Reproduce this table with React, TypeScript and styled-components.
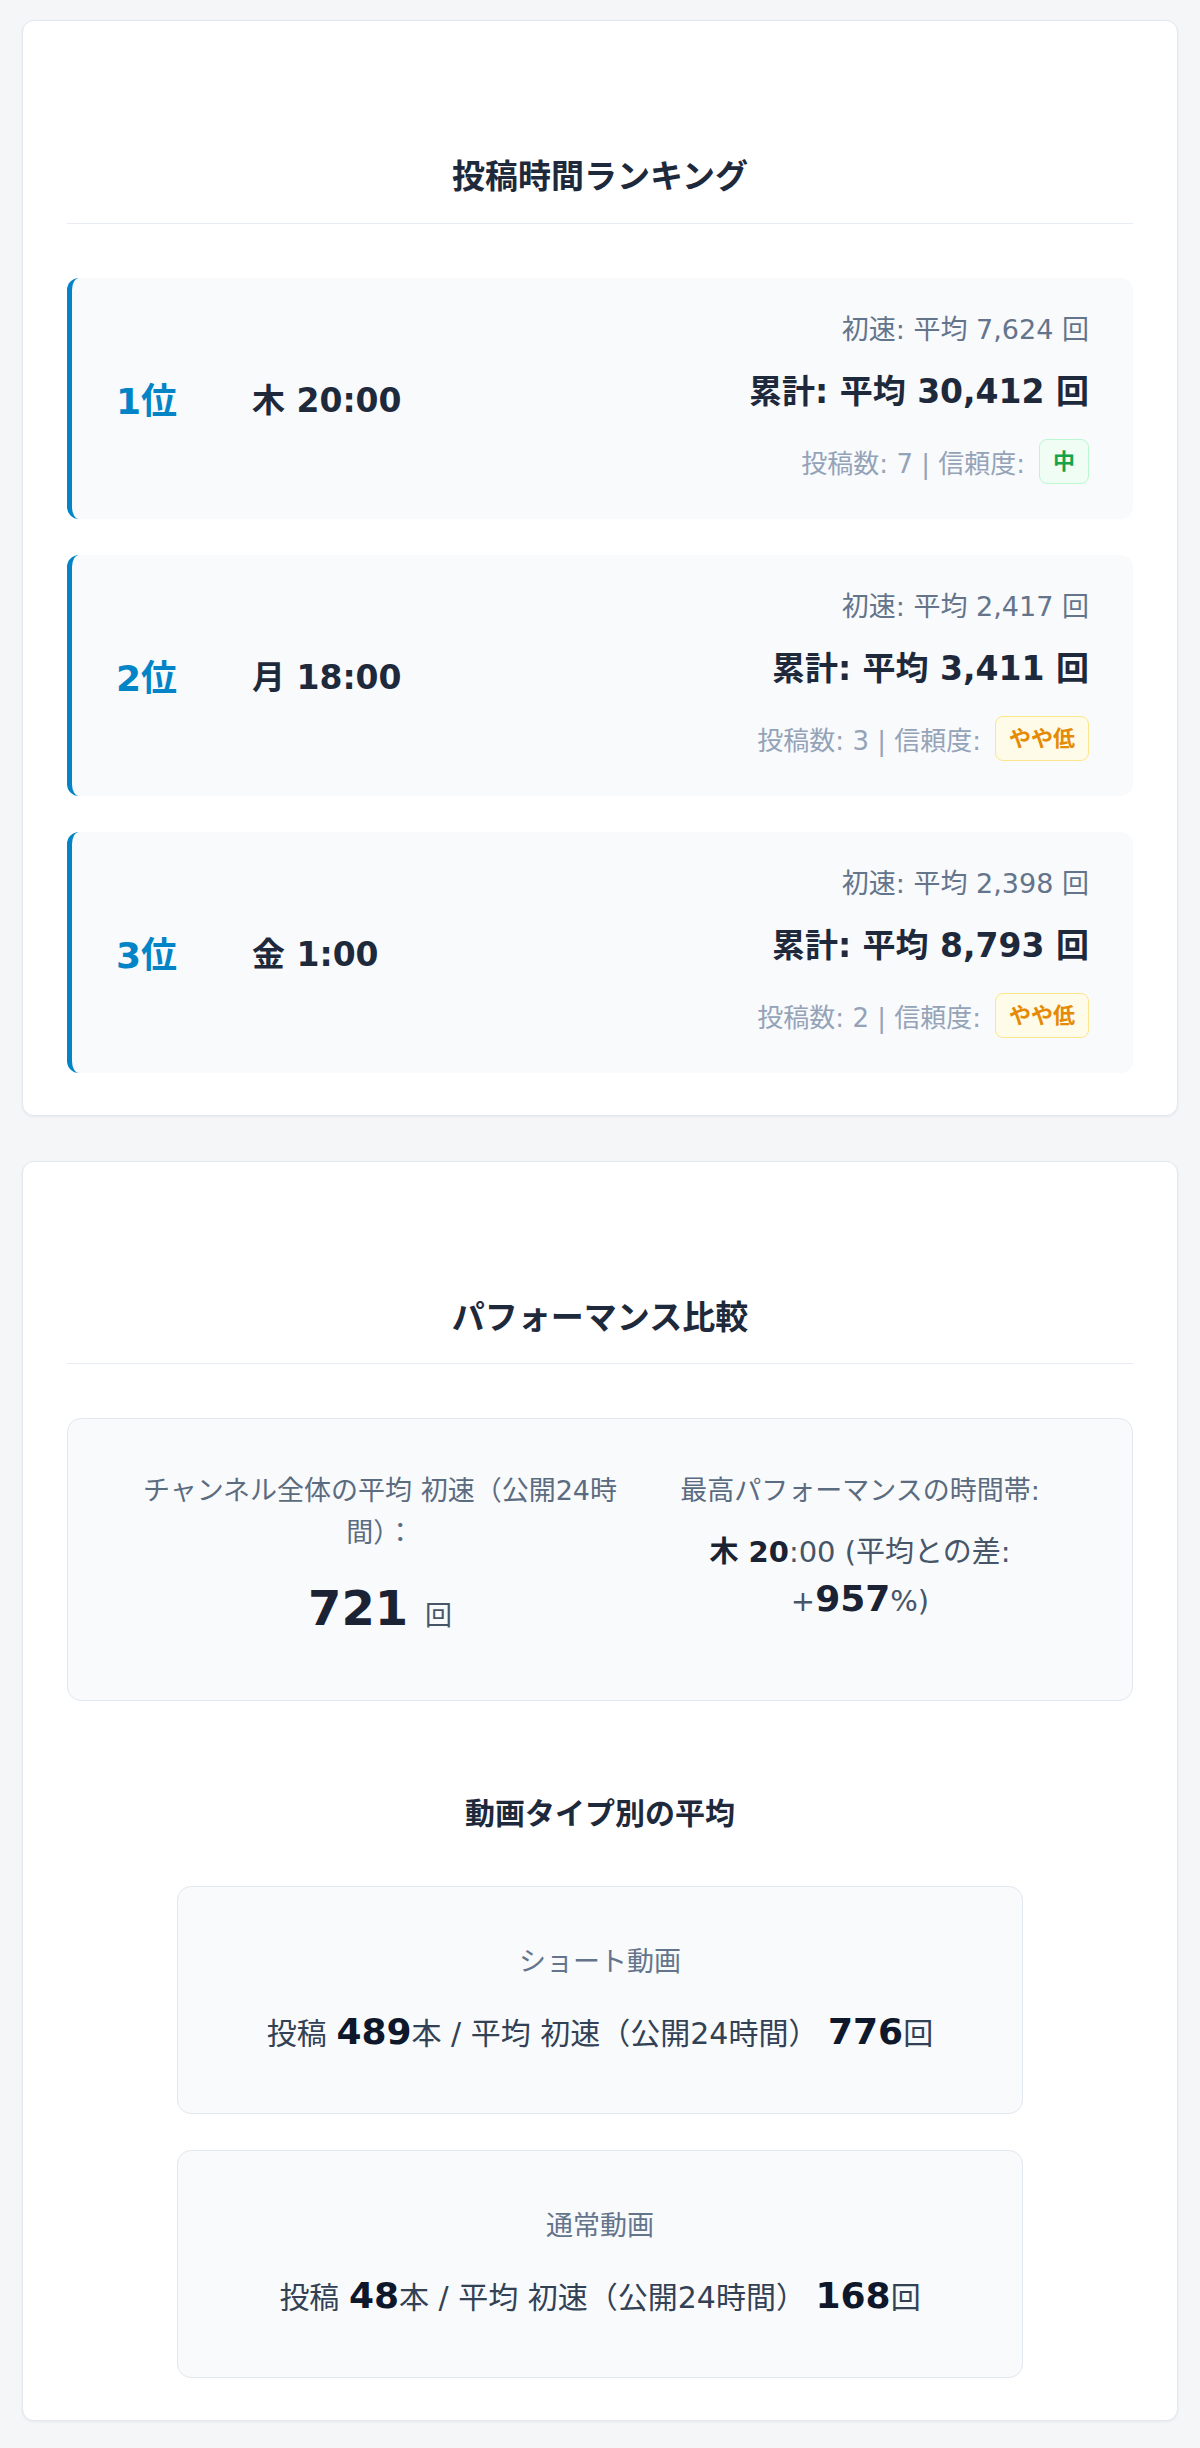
import React from "react";
import styled, { createGlobalStyle, css } from "styled-components";

const GlobalStyle = createGlobalStyle`
  body {
    margin: 0;
    background: #f5f6f8;
    font-family: "DejaVu Sans", "Noto Sans CJK JP", sans-serif;
    color: #1e293b;
  }
`;

const Page = styled.div`
  display: flex;
  flex-direction: column;
  gap: 45px;
  padding: 20px 22px 27px;
`;

const Card = styled.section`
  background: #fff;
  border: 1px solid #e2e8f0;
  border-radius: 12px;
  box-shadow: 0 1px 3px rgba(15, 23, 42, 0.06);
  padding: 44px 44px 42px;
`;

const SectionTitle = styled.h2`
  margin: 87px 0 0;
  padding-bottom: 21px;
  border-bottom: 1.5px solid #e8edf3;
  text-align: center;
  font-size: 33px;
  line-height: 1.5;
  font-weight: 700;
  color: #1e293b;
`;

const RankList = styled.ul`
  list-style: none;
  margin: 54px 0 0;
  padding: 0;
  display: flex;
  flex-direction: column;
  gap: 36px;
`;

const RankRow = styled.li`
  display: flex;
  align-items: center;
  background: #f8fafc;
  border-left: 5px solid #0284c7;
  border-radius: 12px;
  padding: 34px 44px 35px 44px;
`;

const Rank = styled.span`
  width: 136px;
  flex-shrink: 0;
  font-size: 36px;
  font-weight: 700;
  color: #0284c7;
`;

const Slot = styled.span`
  font-size: 33px;
  font-weight: 700;
  color: #1e293b;
`;

const Stats = styled.div`
  margin-left: auto;
  text-align: right;
`;

const FirstSpeed = styled.div`
  font-size: 27px;
  line-height: 36px;
  color: #64748b;
`;

const Total = styled.div`
  margin-top: 21px;
  font-size: 33px;
  line-height: 46px;
  font-weight: 700;
  color: #1e293b;
`;

const Meta = styled.div`
  margin-top: 24px;
  display: flex;
  justify-content: flex-end;
  align-items: center;
  gap: 14px;
  font-size: 26px;
  color: #94a3b8;
`;

const Badge = styled.span<{ $level: "mid" | "low" }>`
  display: inline-block;
  padding: 5px 13px;
  border-radius: 8px;
  font-size: 22px;
  line-height: 33px;
  font-weight: 700;
  ${({ $level }) =>
    $level === "mid"
      ? css`
          background: #f0fdf4;
          border: 1.5px solid #bbf7d0;
          color: #16a34a;
        `
      : css`
          background: #fefce8;
          border: 1.5px solid #fde68a;
          color: #e58a06;
        `}
`;

const CompareBox = styled.div`
  margin-top: 54px;
  display: grid;
  grid-template-columns: 496px 416px;
  justify-content: center;
  align-items: start;
  column-gap: 24px;
  padding: 51px 0 55px;
  background: #f8fafc;
  border: 1.5px solid #e2e8f0;
  border-radius: 14px;
  text-align: center;
`;

const CompareLabel = styled.div`
  font-size: 27px;
  line-height: 42px;
  color: #5b6b80;
`;

const BigValue = styled.div`
  margin-top: 25px;
  font-size: 48px;
  line-height: 58px;
  font-weight: 700;
  color: #1a2233;
`;

const Unit = styled.span`
  font-size: 27px;
  font-weight: 400;
  color: #475569;
`;

const BestSlot = styled.div`
  margin-top: 16px;
  font-size: 29px;
  line-height: 49px;
  color: #475569;
  b {
    color: #1a2233;
  }
`;

const BigPercent = styled.b`
  font-size: 36px;
  line-height: 1;
`;

const SubTitle = styled.h3`
  margin: 90px 0 0;
  text-align: center;
  font-size: 30px;
  line-height: 45px;
  font-weight: 700;
  color: #1e293b;
`;

const TypeList = styled.div`
  margin-top: 50px;
  display: flex;
  flex-direction: column;
  gap: 36px;
`;

const TypeCard = styled.div`
  width: 846px;
  box-sizing: border-box;
  margin: 0 auto;
  padding: 55px 30px 57px;
  background: #f8fafc;
  border: 1.5px solid #e2e8f0;
  border-radius: 14px;
  text-align: center;
`;

const TypeName = styled.div`
  font-size: 27px;
  line-height: 40px;
  color: #64748b;
`;

const TypeLine = styled.div`
  margin-top: 27px;
  font-size: 30px;
  line-height: 45px;
  color: #334155;
  b {
    font-size: 36px;
    color: #0f172a;
  }
`;

const ranks = [
  { rank: 1, slot: "木 20:00", first: "7,624", total: "30,412", posts: 7, level: "mid" as const, label: "中" },
  { rank: 2, slot: "月 18:00", first: "2,417", total: "3,411", posts: 3, level: "low" as const, label: "やや低" },
  { rank: 3, slot: "金 1:00", first: "2,398", total: "8,793", posts: 2, level: "low" as const, label: "やや低" },
];

const types = [
  { name: "ショート動画", posts: 489, avg: 776 },
  { name: "通常動画", posts: 48, avg: 168 },
];

export default function App() {
  return (
    <>
      <GlobalStyle />
      <Page>
        <Card>
          <SectionTitle>投稿時間ランキング</SectionTitle>
          <RankList>
            {ranks.map((r) => (
              <RankRow key={r.rank}>
                <Rank>{r.rank}位</Rank>
                <Slot>{r.slot}</Slot>
                <Stats>
                  <FirstSpeed>初速: 平均 {r.first} 回</FirstSpeed>
                  <Total>累計: 平均 {r.total} 回</Total>
                  <Meta>
                    <span>投稿数: {r.posts} | 信頼度:</span>
                    <Badge $level={r.level}>{r.label}</Badge>
                  </Meta>
                </Stats>
              </RankRow>
            ))}
          </RankList>
        </Card>

        <Card>
          <SectionTitle>パフォーマンス比較</SectionTitle>
          <CompareBox>
            <div>
              <CompareLabel>チャンネル全体の平均 初速（公開24時間）：</CompareLabel>
              <BigValue>
                721 <Unit>回</Unit>
              </BigValue>
            </div>
            <div>
              <CompareLabel>最高パフォーマンスの時間帯:</CompareLabel>
              <BestSlot>
                <b>木 20</b>:00 (平均との差: +<BigPercent>957</BigPercent>%)
              </BestSlot>
            </div>
          </CompareBox>

          <SubTitle>動画タイプ別の平均</SubTitle>
          <TypeList>
            {types.map((t) => (
              <TypeCard key={t.name}>
                <TypeName>{t.name}</TypeName>
                <TypeLine>
                  投稿 <b>{t.posts}</b>本 / 平均 初速（公開24時間） <b>{t.avg}</b>回
                </TypeLine>
              </TypeCard>
            ))}
          </TypeList>
        </Card>
      </Page>
    </>
  );
}
